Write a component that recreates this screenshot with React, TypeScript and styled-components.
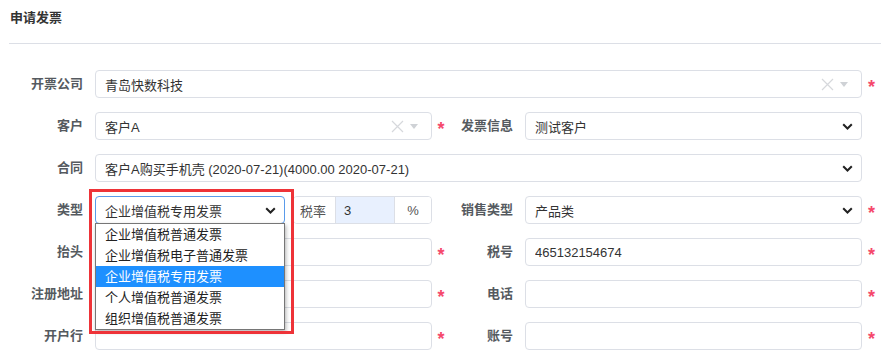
import styled, { createGlobalStyle } from 'styled-components';

const GlobalStyle = createGlobalStyle`
  html, body {
    margin: 0;
    padding: 0;
    background: #ffffff;
  }
  body {
    font-family: "Liberation Sans", "Noto Sans CJK SC", sans-serif;
    font-size: 13px;
    color: #333333;
  }
`;

const Page = styled.div`
  width: 881px;
  height: 359px;
  overflow: hidden;
  background: #ffffff;
`;

const Header = styled.div`
  margin-left: 9px;
  padding: 9px 0 0 1px;
  height: 34px;
  border-bottom: 1px solid #dcdfe6;
`;

const Title = styled.h3`
  margin: 0;
  font-size: 13px;
  font-weight: 700;
  line-height: 18px;
  color: #333333;
`;

const Form = styled.div`
  display: grid;
  grid-template-columns: 95px 337px 18px 75px 337px 19px;
  grid-auto-rows: 28px;
  row-gap: 14px;
  padding-top: 26px;
`;

const Label = styled.label`
  padding-right: 12px;
  text-align: right;
  font-weight: 700;
  color: #555a60;
  line-height: 28px;
  white-space: nowrap;
`;

const Star = styled.span<{ $hidden?: boolean }>`
  visibility: ${(p) => (p.$hidden ? 'hidden' : 'visible')};
  color: #f5486b;
  font-weight: 700;
  font-size: 18px;
  line-height: 34px;
  text-align: center;
`;

const Wide = styled.div`
  grid-column: span 4;
`;

const Box = styled.div<{ $focus?: boolean }>`
  box-sizing: border-box;
  height: 28px;
  width: 100%;
  display: flex;
  align-items: center;
  padding: 0 9px;
  border: 1px solid ${(p) => (p.$focus ? '#5a9bea' : '#dcdfe6')};
  border-radius: 4px;
  background: #ffffff;
  color: #333333;
  white-space: nowrap;
`;

const Value = styled.span`
  flex: 1;
  overflow: hidden;
`;

const ClearIcon = styled.svg`
  width: 13px;
  height: 13px;
  margin-right: 6px;
`;

const SmallCaret = styled.svg`
  width: 8px;
  height: 5px;
  margin-right: 4px;
`;

const Chevron = styled.svg`
  width: 11px;
  height: 7px;
  margin-right: -1px;
`;

const TypeCell = styled.div`
  position: relative;
  display: flex;
  align-items: center;
  gap: 8px;
`;

const TypeSelect = styled.div`
  width: 190px;
  flex: none;
`;

const InputGroup = styled.div`
  display: flex;
  flex: 1;
  height: 28px;
  box-sizing: border-box;
  border: 1px solid #dcdfe6;
  border-radius: 4px;
  overflow: hidden;
`;

const Addon = styled.span<{ $w: number; $center?: boolean }>`
  width: ${(p) => p.$w}px;
  flex: none;
  display: flex;
  align-items: center;
  justify-content: ${(p) => (p.$center ? 'center' : 'flex-start')};
  padding-left: ${(p) => (p.$center ? 0 : 6)}px;
  box-sizing: border-box;
  color: #555555;
  background: #ffffff;
`;

const RateInput = styled.span`
  width: 60px;
  flex: none;
  display: flex;
  align-items: center;
  padding-left: 8px;
  box-sizing: border-box;
  background: #e8f0fe;
  border-left: 1px solid #dcdfe6;
  border-right: 1px solid #dcdfe6;
`;

const DropList = styled.ul`
  position: absolute;
  top: 27px;
  left: 0;
  width: 190px;
  box-sizing: border-box;
  margin: 0;
  padding: 0;
  list-style: none;
  background: #ffffff;
  border: 1px solid #767676;
  box-shadow: 1px 2px 4px rgba(0, 0, 0, 0.3);
  z-index: 5;
`;

const Option = styled.li<{ $active?: boolean }>`
  height: 21px;
  line-height: 21px;
  padding-left: 9px;
  background: ${(p) => (p.$active ? '#1e90ff' : 'transparent')};
  color: ${(p) => (p.$active ? '#ffffff' : '#222222')};
`;

const Highlight = styled.div`
  position: absolute;
  left: -6px;
  top: -7px;
  width: 205px;
  height: 145px;
  box-sizing: border-box;
  border: 3px solid #ee3338;
  pointer-events: none;
  z-index: 6;
`;

const Clearable = () => (
  <>
    <ClearIcon viewBox="0 0 13 13">
      <path d="M1 1 L12 12 M12 1 L1 12" stroke="#d6d8dc" strokeWidth="1.2" fill="none" />
    </ClearIcon>
    <SmallCaret viewBox="0 0 8 5">
      <path d="M0 0 L8 0 L4 5 Z" fill="#cfd2d6" />
    </SmallCaret>
  </>
);

const Down = () => (
  <Chevron viewBox="0 0 11 7">
    <path d="M1.2 1.2 L5.5 5.5 L9.8 1.2" stroke="#222" strokeWidth="2" fill="none" />
  </Chevron>
);

const typeOptions = [
  '企业增值税普通发票',
  '企业增值税电子普通发票',
  '企业增值税专用发票',
  '个人增值税普通发票',
  '组织增值税普通发票',
];

export default function App() {
  return (
    <Page>
      <GlobalStyle />
      <Header>
        <Title>申请发票</Title>
      </Header>
      <Form>
        <Label>开票公司</Label>
        <Wide>
          <Box>
            <Value>青岛快数科技</Value>
            <Clearable />
          </Box>
        </Wide>
        <Star>*</Star>

        <Label>客户</Label>
        <Box>
          <Value>客户A</Value>
          <Clearable />
        </Box>
        <Star>*</Star>
        <Label>发票信息</Label>
        <Box>
          <Value>测试客户</Value>
          <Down />
        </Box>
        <Star $hidden>*</Star>

        <Label>合同</Label>
        <Wide>
          <Box>
            <Value>客户A购买手机壳 (2020-07-21)(4000.00 2020-07-21)</Value>
            <Down />
          </Box>
        </Wide>
        <Star $hidden>*</Star>

        <Label>类型</Label>
        <TypeCell>
          <TypeSelect>
            <Box $focus>
              <Value>企业增值税专用发票</Value>
              <Down />
            </Box>
          </TypeSelect>
          <InputGroup>
            <Addon $w={41}>税率</Addon>
            <RateInput>3</RateInput>
            <Addon $w={36} $center>%</Addon>
          </InputGroup>
          <DropList>
            {typeOptions.map((o) => (
              <Option key={o} $active={o === '企业增值税专用发票'}>
                {o}
              </Option>
            ))}
          </DropList>
          <Highlight />
        </TypeCell>
        <Star $hidden>*</Star>
        <Label>销售类型</Label>
        <Box>
          <Value>产品类</Value>
          <Down />
        </Box>
        <Star>*</Star>

        <Label>抬头</Label>
        <Box />
        <Star>*</Star>
        <Label>税号</Label>
        <Box>
          <Value>465132154674</Value>
        </Box>
        <Star>*</Star>

        <Label>注册地址</Label>
        <Box />
        <Star>*</Star>
        <Label>电话</Label>
        <Box />
        <Star>*</Star>

        <Label>开户行</Label>
        <Box />
        <Star>*</Star>
        <Label>账号</Label>
        <Box />
        <Star>*</Star>
      </Form>
    </Page>
  );
}
